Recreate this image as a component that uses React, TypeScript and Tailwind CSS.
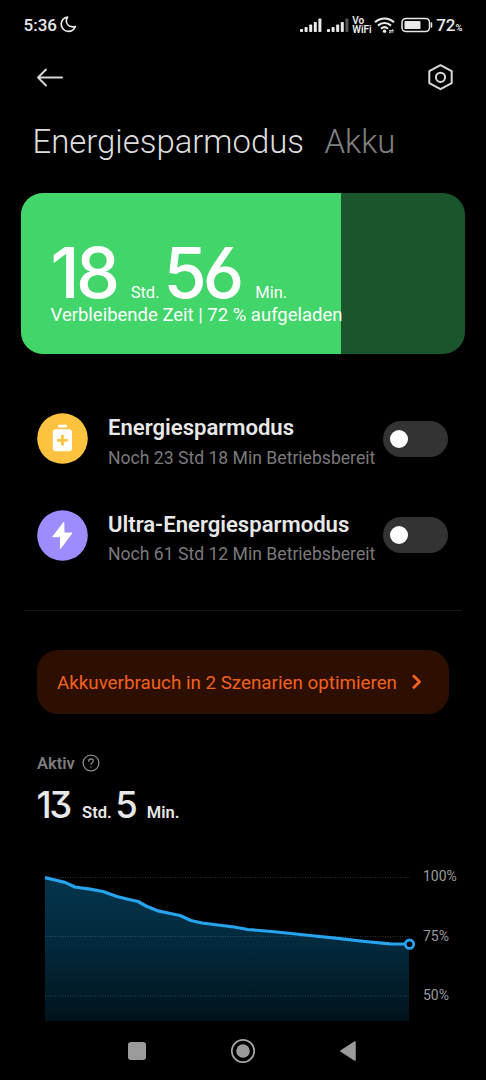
import React from "react";

function Signal({ x, dimLast }: { x: number; dimLast?: boolean }) {
  return (
    <g>
      {[3, 5, 7.5, 10, 13.5].map((h, i) => (
        <rect key={i} x={x + i * 4.6} y={14 - h} width="3" height={h} rx="0.8" fill={dimLast && i === 4 ? "#555" : "#eaeaea"} />
      ))}
    </g>
  );
}

function StatusBar() {
  return (
    <div className="flex h-[50px] items-center pl-[23.500px] pr-[23.500px] text-[#eaeaea]">
      <span className="text-[17px] leading-6 font-medium">5:36</span>
      <svg className="ml-[3px] -mt-px" width="17" height="17" viewBox="0 0 17 17" fill="none" stroke="#eaeaea" strokeWidth="1.7" strokeLinejoin="round">
        <path d="M7.6 1.1C4 1.4 1.2 4.3 1.2 8.1c0 4 3.1 7.3 7.2 7.3 3.2 0 5.9-2 6.9-4.9-1 .4-1.9.5-2.8.4C8.900 10.600 6.300 8 6.300 4.700c0-1.300.5-2.600 1.300-3.600z" />
      </svg>
      <div className="grow" />
      <svg width="50" height="14" viewBox="0 0 50 14">
        <Signal x={0} />
        <Signal x={27} dimLast />
      </svg>
      <div className="ml-[2px] w-[20px] text-[10px] leading-[9.500px] font-semibold">
        <div>Vo</div>
        <div>WiFi</div>
      </div>
      <svg className="ml-[2px]" width="22" height="18" viewBox="0 0 22 18" fill="none" stroke="#eaeaea" strokeWidth="2.200">
        <path d="M1 6.300c5.500-5.100 13.500-5.100 19 0" />
        <path d="M4 9.600c3.800-3.500 9.200-3.500 13 0" />
        <path d="M7 12.700c2.100-1.900 4.900-1.900 7 0" />
        <circle cx="10.500" cy="15.200" r="1.700" fill="#eaeaea" stroke="none" />
        <path d="M15 14.600h4.500l-1.300-1.200M19.500 16h-4.500l1.300 1.200" strokeWidth="0.900" />
      </svg>
      <svg className="ml-[5px]" width="33" height="16" viewBox="0 0 33 16" fill="none">
        <rect x="1" y="1.400" width="27.500" height="13.200" rx="4" stroke="#eaeaea" strokeWidth="1.500" />
        <rect x="3.500" y="3.900" width="16" height="8.200" rx="1.200" fill="#eaeaea" />
        <path d="M30.500 6v4" stroke="#eaeaea" strokeWidth="1.500" strokeLinecap="round" />
      </svg>
      <span className="ml-[2px] text-[17px] leading-6 font-medium">72</span>
      <span className="mt-[5px] text-[9.500px] leading-3 font-semibold">%</span>
    </div>
  );
}

function Toggle() {
  return (
    <div className="flex h-[36px] w-[65px] items-center rounded-full bg-[#333333] pl-[7px]">
      <div className="size-[18px] rounded-full bg-white" />
    </div>
  );
}

function ModeRow({ icon, title, sub }: { icon: React.ReactNode; title: string; sub: string }) {
  return (
    <div className="flex h-[96.500px] items-center pl-[36.500px] pr-[38px]">
      {icon}
      <div className="ml-[20.500px] grow pt-[8px] whitespace-nowrap">
        <div className="text-[22.100px] leading-[29.500px] font-semibold text-[#e8e8e8]">{title}</div>
        <div className="text-[17.600px] leading-[30px] text-[#7a7a7a]">{sub}</div>
      </div>
      <Toggle />
    </div>
  );
}

const GRID = [877.5, 936.5, 996];
const LINE =
  "M45 877.600L56 880.200L65 882.400L75 887L90 889.200L103 891.500L117 896.500L128 899.200L138 901.500L146 906L157 910.600L168 913L180 915.500L191 920.500L202 923L218 925L234 927L248 929.500L277 932L310 935.500L340 938.700L365 941.500L390 943.900L409 944";

function BatteryChart() {
  return (
    <div className="flex pl-[40px]">
      <svg className="shrink-0" width="378" height="154" viewBox="40 867 378 154">
        <defs>
          <linearGradient id="area" x1="0" y1="877" x2="0" y2="1021" gradientUnits="userSpaceOnUse">
            <stop offset="0" stopColor="#04354c" />
            <stop offset="0.500" stopColor="#03283b" />
            <stop offset="1" stopColor="#01131c" />
          </linearGradient>
        </defs>
        <path d={LINE + "V1021H45Z"} fill="url(#area)" />
        {GRID.map((y) => (
          <path key={y} d={`M45 ${y}H409`} stroke="#8ab4cc" strokeOpacity="0.300" strokeWidth="1" strokeDasharray="1 1.500" />
        ))}
        <path d={LINE} fill="none" stroke="#27a4ee" strokeWidth="3.200" strokeLinejoin="round" />
        <circle cx="409.500" cy="944.200" r="4.200" fill="#000" stroke="#27a4ee" strokeWidth="2.800" />
      </svg>
      <div className="ml-[5px] -mt-px text-[14px] leading-5 text-[#999999]">
        <div className="h-[59.500px]">100%</div>
        <div className="h-[59.500px]">75%</div>
        <div>50%</div>
      </div>
    </div>
  );
}

export default function App() {
  return (
    <div className="flex h-[1080px] w-[486px] flex-col overflow-hidden bg-black font-[Roboto,sans-serif]">
      <StatusBar />
      <div className="flex h-[54px] items-center justify-between pl-[36px] pr-[32px]">
        <svg width="28" height="20" viewBox="0 0 28 20" fill="none" stroke="#d8d8d8" strokeWidth="1.900" strokeLinecap="round" strokeLinejoin="round">
          <path d="M26 10.500H2M10 2.500L2 10.500L10 18.500" />
        </svg>
        <svg width="27" height="28" viewBox="0 0 27 28" fill="none" stroke="#d8d8d8" strokeWidth="2" strokeLinejoin="round">
          <path d="M13.500 2.200L24.700 8.200V20.200L13.500 26.200L2.300 20.200V8.200Z" />
          <circle cx="13.500" cy="14.300" r="4.600" />
        </svg>
      </div>
      <div className="flex h-[89px] gap-[20.500px] pt-[18px] pl-[32.500px] text-[32.900px] leading-10 font-[280]">
        <span className="text-[#dedede]">Energiesparmodus</span>
        <span className="text-[#808080]">Akku</span>
      </div>

      <div className="mx-[21px] h-[161px] shrink-0 overflow-hidden rounded-[22px] bg-[#1b552b]">
        <div className="h-full w-[72%] bg-[#41d56a] pt-[44.500px] pl-[29.500px] whitespace-nowrap text-white">
          <div className="flex h-[69px] items-baseline text-[16.500px] leading-[69px]">
            <span className="font-[Inter,sans-serif] text-[70px] font-medium tracking-[-3.500px] [font-feature-settings:'cv03','cv09']">18</span>
            <span className="ml-[14px]">Std.</span>
            <span className="ml-[4px] font-[Inter,sans-serif] text-[70px] font-medium tracking-[-4px] [font-feature-settings:'cv03','cv09']">56</span>
            <span className="ml-[15px]">Min.</span>
          </div>
          <div className="-mt-[4px] text-[18.500px] leading-6">Verbleibende Zeit | 72 % aufgeladen</div>
        </div>
      </div>

      <div className="mt-[36.500px]">
        <ModeRow
          title="Energiesparmodus"
          sub="Noch 23 Std 18 Min Betriebsbereit"
          icon={
            <svg width="51" height="51" viewBox="0 0 51 51">
              <circle cx="25.500" cy="25.500" r="25.300" fill="#fdc23f" />
              <rect x="21" y="11.700" width="9" height="2.800" rx="1" fill="#fff" />
              <rect x="15.800" y="16.300" width="19.200" height="22" rx="3" fill="#fff" />
              <path d="M25.400 22v10.600M20.100 27.300h10.600" stroke="#fdc23f" strokeWidth="2.800" />
            </svg>
          }
        />
        <ModeRow
          title="Ultra-Energiesparmodus"
          sub="Noch 61 Std 12 Min Betriebsbereit"
          icon={
            <svg width="51" height="51" viewBox="0 0 51 51">
              <circle cx="25.500" cy="25.500" r="25.300" fill="#9c8cfe" />
              <path d="M26.800 12.300L15.800 26.700h7.800l-.2 11.800L35 23h-8z" fill="#fff" stroke="#fff" strokeWidth="1" strokeLinejoin="round" />
            </svg>
          }
        />
      </div>

      <div className="mx-[24px] mt-[26.500px] h-px shrink-0 bg-[#161616]" />

      <div className="mt-[39px] mr-[37px] ml-[37px] flex h-[64px] shrink-0 items-center rounded-[21px] bg-[#2d0f01] pl-[20px] text-[18.800px] whitespace-nowrap text-[#f4601f]">
        <span className="pt-[3px]">Akkuverbrauch in 2 Szenarien optimieren</span>
        <svg className="ml-[14px]" width="12" height="18" viewBox="0 0 12 18" fill="none" stroke="#f4601f" strokeWidth="2.800" strokeLinejoin="round">
          <path d="M2 2.200L8.600 8.700L2 15.200" />
        </svg>
      </div>

      <div className="mt-[37px] flex h-[24px] items-center pl-[37px] text-[16.500px] font-semibold text-[#7d7d7d]">
        <span className="pt-[3px]">Aktiv</span>
        <svg className="ml-[7.500px]" width="18" height="18" viewBox="0 0 18 18" fill="none" stroke="#8a8a8a" strokeWidth="1.300" strokeLinecap="round">
          <circle cx="9" cy="9" r="7.900" />
          <path d="M6.700 7.200c0-1.400 1-2.200 2.300-2.200s2.300.8 2.300 2c0 1.600-2.300 1.700-2.300 3.400M9 12.800v.2" />
        </svg>
      </div>
      <div className="mt-[11px] flex h-[38px] items-baseline pl-[36.500px] text-[16.500px] leading-[38px] font-semibold text-[#e8e8e8]">
        <span className="font-[Inter,sans-serif] text-[36.500px] font-medium tracking-[-2.500px] [font-feature-settings:'cv03','cv09']">13</span>
        <span className="ml-[12.500px]">Std.</span>
        <span className="ml-[3.500px] font-[Inter,sans-serif] text-[36.500px] font-medium tracking-[-2px] [font-feature-settings:'cv03','cv09']">5</span>
        <span className="ml-[11px]">Min.</span>
      </div>

      <div className="mt-[43px] shrink-0">
        <BatteryChart />
      </div>

      <div className="flex h-[59px] shrink-0 items-center justify-between pr-[129px] pl-[128px]">
        <div className="size-[18px] rounded-[3px] bg-[#9b9b9b]" />
        <svg className="ml-[1px]" width="26" height="26" viewBox="0 0 26 26">
          <circle cx="13" cy="13" r="11.200" fill="none" stroke="#a5a5a5" strokeWidth="1.700" />
          <circle cx="13" cy="13" r="6.800" fill="#9b9b9b" />
        </svg>
        <svg width="18" height="22" viewBox="0 0 18 22">
          <path d="M16 2L2 11L16 20Z" fill="#9b9b9b" stroke="#9b9b9b" strokeWidth="1.500" strokeLinejoin="round" />
        </svg>
      </div>
    </div>
  );
}
